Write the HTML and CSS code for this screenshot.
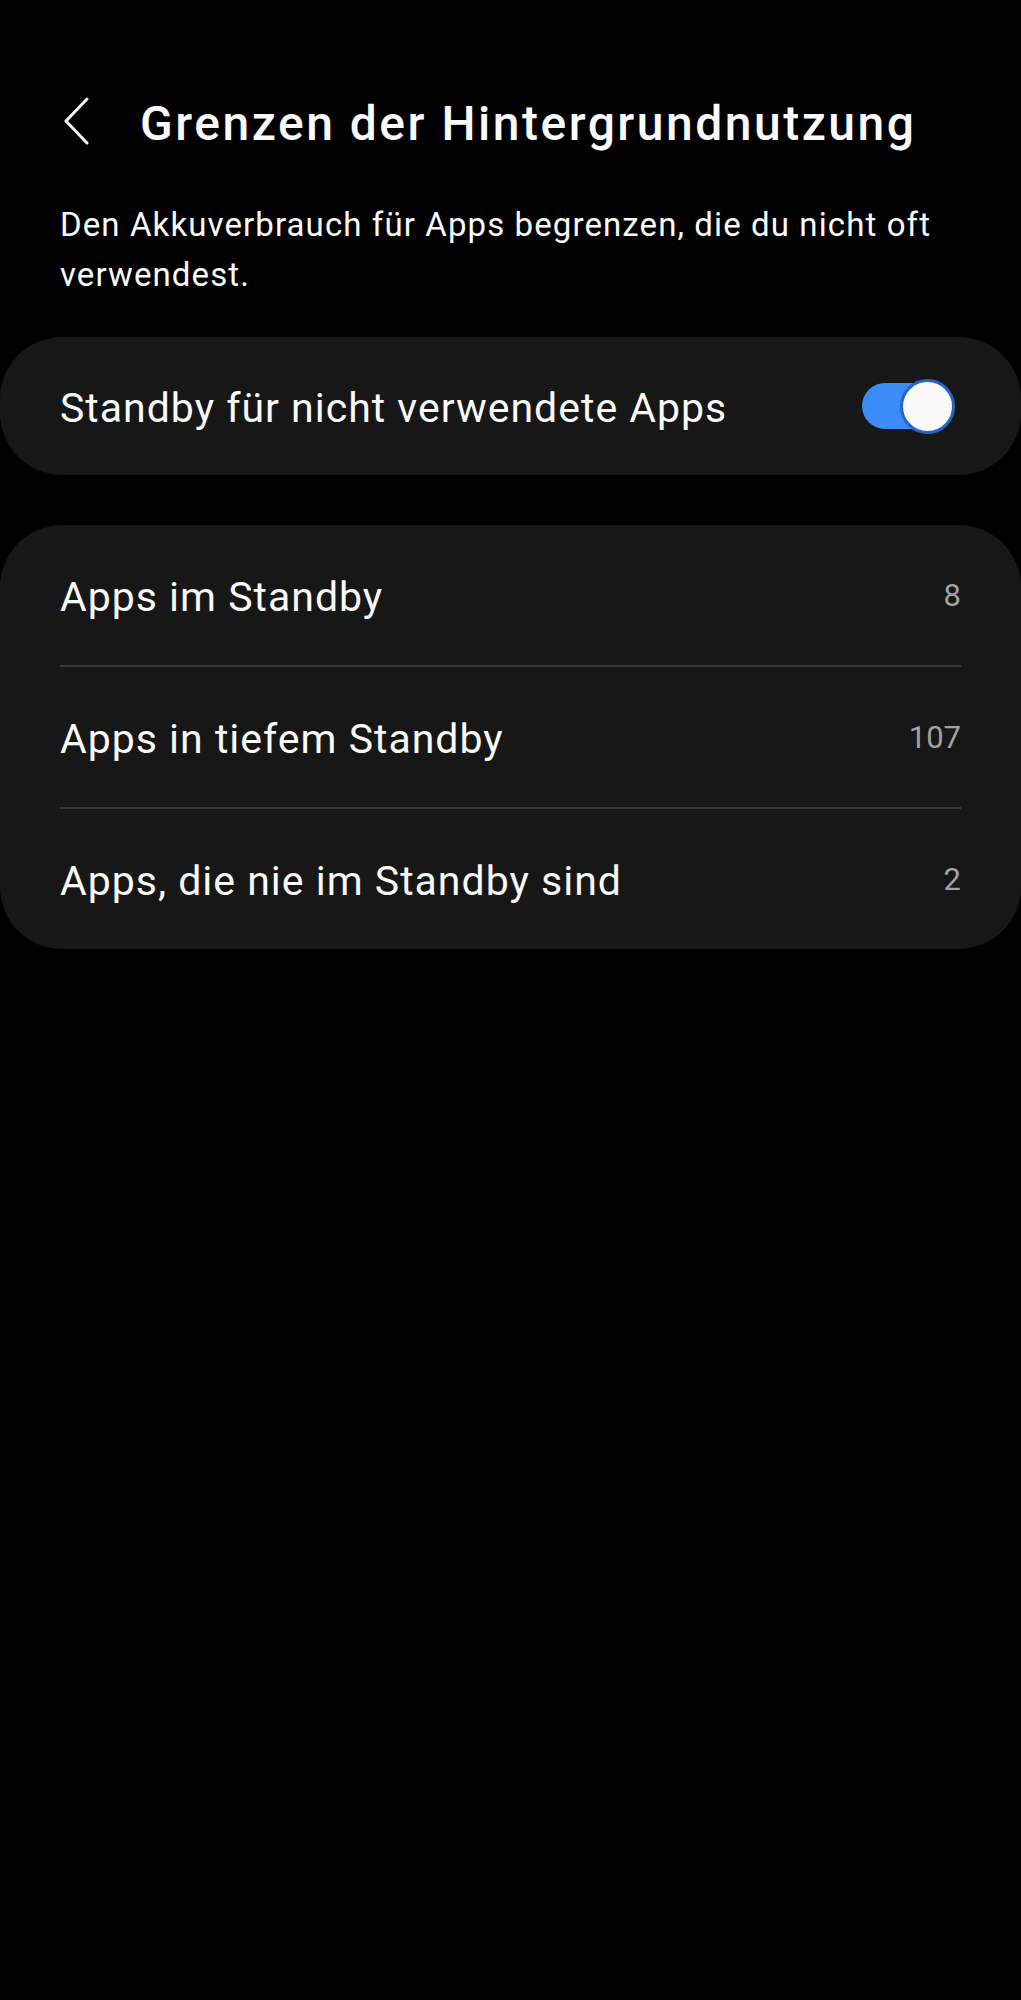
FILE: index.html
```html
<!DOCTYPE html>
<html lang="de">
<head>
  <meta charset="utf-8">
  <title>Grenzen der Hintergrundnutzung</title>
  <link rel="stylesheet" href="styles.css">
</head>
<body>
  <div class="header">
    <button class="back" aria-label="Zurück">
      <svg width="28" height="48" viewBox="0 0 28 48">
        <polyline points="25,2 4,24 25,46" fill="none" stroke="#f5f5f5" stroke-width="3" stroke-linecap="round" stroke-linejoin="round"/>
      </svg>
    </button>
    <h1 class="title">Grenzen der Hintergrundnutzung</h1>
  </div>

  <p class="description">Den Akkuverbrauch für Apps begrenzen, die du nicht oft verwendest.</p>

  <div class="card toggle-card">
    <span class="label">Standby für nicht verwendete Apps</span>
    <div class="switch">
      <span class="track"></span>
      <span class="thumb"></span>
    </div>
  </div>

  <div class="card list-card">
    <div class="row">
      <div class="row-inner">
        <span class="label">Apps im Standby</span>
        <span class="count">8</span>
      </div>
    </div>
    <div class="row">
      <div class="row-inner">
        <span class="label">Apps in tiefem Standby</span>
        <span class="count">107</span>
      </div>
    </div>
    <div class="row">
      <div class="row-inner">
        <span class="label">Apps, die nie im Standby sind</span>
        <span class="count">2</span>
      </div>
    </div>
  </div>
</body>
</html>
```

FILE: styles.css
```css
body {
  margin: 0;
  background-color: #000;
  color: #fafafa;
  font-family: Roboto, 'Noto Sans', sans-serif;
}
.header {
  display: flex;
  align-items: center;
  padding: 94px 0 0 62px;
  height: 60px;
}
.back {
  display: flex;
  background: none;
  border: none;
  padding: 0;
  margin: -6px 50px 0 0;
  cursor: pointer;
}
.title {
  margin: 0;
  font-size: 48px;
  line-height: 60px;
  font-weight: 500;
  letter-spacing: 2.5px;
}
.description {
  margin: 46px 60px 37px 60px;
  font-size: 33px;
  line-height: 50px;
  letter-spacing: 1.1px;
}
.card {
  background-color: #171717;
  border-radius: 62px;
}
.toggle-card {
  display: flex;
  align-items: center;
  justify-content: space-between;
  height: 138px;
  padding: 0 66px 0 60px;
}
.label {
  font-size: 41px;
  letter-spacing: 1px;
  padding-top: 3px;
}
.switch {
  position: relative;
  width: 93px;
  height: 55px;
}
.track {
  position: absolute;
  left: 0;
  top: 4px;
  width: 86px;
  height: 46px;
  border-radius: 23px;
  background-color: #3b8cf6;
}
.thumb {
  position: absolute;
  right: 0;
  top: 0;
  width: 49px;
  height: 49px;
  border-radius: 50%;
  background-color: #fafafa;
  border: 3px solid #2466c4;
}
.list-card {
  margin-top: 50px;
}
.row {
  padding: 0 60px;
}
.row-inner {
  display: flex;
  align-items: center;
  justify-content: space-between;
  height: 140px;
  border-bottom: 2px solid #3a3a3a;
}
.row:last-child .row-inner {
  border-bottom: none;
}
.count {
  font-size: 31px;
  color: #a2a2a2;
}
```
